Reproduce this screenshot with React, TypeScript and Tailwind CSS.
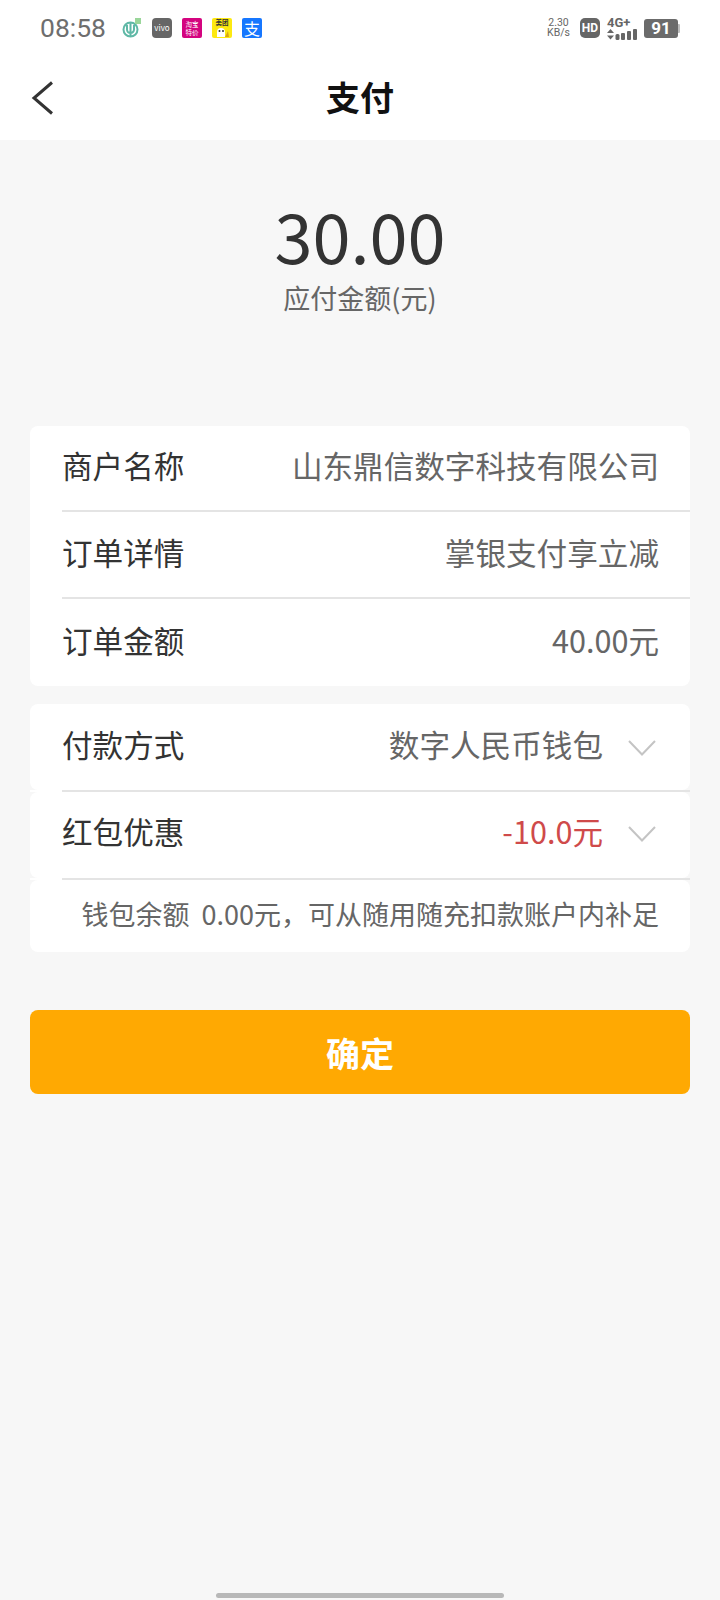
const font = { fontFamily: '"Noto Sans CJK SC", "Noto Sans", sans-serif' };

function Chevron() {
  return (
    <svg width="28" height="16" viewBox="0 0 28 16" fill="none" className="ml-[25px] mr-[3px] mt-[2px]">
      <path d="M1 1 L14 14.5 L27 1" stroke="#c4c4c4" strokeWidth="2" />
    </svg>
  );
}

function Row({
  label,
  value,
  height,
  red,
  arrow,
  className = "",
}: {
  label: string;
  value: string;
  height: string;
  red?: boolean;
  arrow?: boolean;
  className?: string;
}) {
  return (
    <div className={`flex items-center justify-between bg-white pl-8 pr-[31px] text-[30.6px] ${height} ${className}`}>
      <span className="pb-[4px] text-[#333333]">{label}</span>
      <div className="flex items-center">
        <span className={`pb-[4px] ${red ? "text-[#cf4a4a]" : "text-[#666666]"}`}>{value}</span>
        {arrow && <Chevron />}
      </div>
    </div>
  );
}

function Divider() {
  return (
    <div className="bg-white pl-8">
      <div className="h-[2px] bg-[#e4e4e4]" />
    </div>
  );
}

function StatusLeft() {
  return (
    <div className="flex items-center">
      <span className="w-[82px] text-[26.5px] leading-none text-[#6e6e6e]" style={{ fontFamily: "Roboto, sans-serif" }}>
        08:58
      </span>
      <svg width="20" height="20" viewBox="0 0 20 20" fill="none">
        <circle cx="8.5" cy="11.5" r="7" stroke="#5fb8a6" strokeWidth="2" />
        <path d="M8.5 5v13M5 7v4.5a3.5 3.5 0 0 0 7 0V7" stroke="#5fb8a6" strokeWidth="2" />
        <rect x="13" y="0" width="6" height="6" fill="#9ad69a" />
      </svg>
      <div className="ml-[10px] flex h-5 w-5 items-center justify-center rounded-[4px] bg-[#666666] text-[8px] leading-none text-white">
        vivo
      </div>
      <div className="ml-[10px] flex h-5 w-5 flex-col items-center justify-center rounded-[2px] bg-[#d4047f] text-[6.5px] leading-[8px] text-white">
        <span>淘宝</span>
        <span>特价</span>
      </div>
      <div className="ml-[10px] flex h-5 w-5 flex-col items-center rounded-[2px] bg-[#fde910] text-[6.5px] font-bold leading-[9px] text-[#333333]">
        <span>美团</span>
        <svg width="14" height="10" viewBox="0 0 14 10">
          <path d="M2 5a4 4 0 0 1 8 0v5H2z" fill="#ffffff" />
          <circle cx="4.5" cy="4" r="1" fill="#333333" />
          <circle cx="8" cy="4" r="1" fill="#333333" />
          <path d="M10 10l3-6 1 6z" fill="#d9a514" />
        </svg>
      </div>
      <div className="ml-[10px] flex h-5 w-5 items-center justify-center rounded-[2px] bg-[#1677ff] text-[16px] leading-none text-white">
        支
      </div>
    </div>
  );
}

function StatusRight() {
  return (
    <div className="flex items-center text-[#666666]">
      <div className="flex w-[25px] flex-col items-center text-[10.5px] leading-[10px]" style={{ fontFamily: "Roboto, sans-serif" }}>
        <span>2.30</span>
        <span>KB/s</span>
      </div>
      <div
        className="ml-[9px] flex h-5 w-5 items-center justify-center rounded-[5px] bg-[#666666] text-[12px] font-bold leading-none text-white"
        style={{ fontFamily: "Roboto, sans-serif" }}
      >
        HD
      </div>
      <div className="ml-[7px] flex w-[30px] flex-col">
        <span className="text-[13px] font-bold leading-[11px]" style={{ fontFamily: "Roboto, sans-serif" }}>
          4G+
        </span>
        <svg width="30" height="11" viewBox="0 0 30 11" fill="#666666" className="mt-[1px]">
          <path d="M3.5 0l3.5 4H0zM3.5 10.5L0 6.5h7z" />
          <rect x="8.5" y="5" width="4" height="6" rx="1.5" />
          <rect x="14" y="4" width="4" height="7" rx="1" />
          <rect x="20" y="2" width="4" height="9" rx="1" />
          <rect x="26" y="0" width="4" height="11" rx="1" />
        </svg>
      </div>
      <div className="ml-[7px] flex items-center">
        <div
          className="flex h-[19px] w-[34px] items-center justify-center rounded-[3px] bg-[#6b6b6b] text-[17px] font-bold leading-none text-white"
          style={{ fontFamily: "Roboto, sans-serif" }}
        >
          91
        </div>
        <div className="h-[9px] w-[2px] rounded-r-[1px] bg-[#bdbdbd]" />
      </div>
    </div>
  );
}

export default function App() {
  return (
    <div className="flex h-[1600px] flex-col bg-[#f7f7f7]" style={font}>
      <div className="h-[140px] bg-white">
        <div className="flex h-[56px] items-center justify-between pl-10 pr-10">
          <StatusLeft />
          <StatusRight />
        </div>
        <div className="flex h-[84px] items-center justify-center">
          <div className="relative flex w-full justify-center">
            <svg width="24" height="34" viewBox="0 0 24 34" fill="none" className="absolute left-[31px] top-[8px]">
              <path d="M21 1.5 L3 17 L21 32.5" stroke="#333333" strokeWidth="3" />
            </svg>
            <span className="pb-[2px] text-[34px] font-bold leading-[48px] text-[#111111]">支付</span>
          </div>
        </div>
      </div>

      <div className="flex h-[286px] flex-col items-center pt-[61px]">
        <span className="text-[68.5px] leading-[68px] text-[#333333]">30.00</span>
        <span className="mt-[12px] text-[27px] leading-[34px] text-[#666666]">应付金额(元)</span>
      </div>

      <div className="mx-[30px] overflow-hidden rounded-lg">
        <Row label="商户名称" value="山东鼎信数字科技有限公司" height="h-[84px]" />
        <Divider />
        <Row label="订单详情" value="掌银支付享立减" height="h-[85px]" />
        <Divider />
        <Row label="订单金额" value="40.00元" height="h-[87px]" />
      </div>

      <div className="mx-[30px] mt-[18px]">
        <Row label="付款方式" value="数字人民币钱包" height="h-[86px]" arrow className="rounded-lg" />
        <Divider />
        <Row label="红包优惠" value="-10.0元" height="h-[86px]" red arrow className="rounded-lg pb-[3px]" />
        <Divider />
        <div className="flex h-[72px] items-center justify-end rounded-lg bg-white pb-[3px] pr-[31px] text-[27px] text-[#666666] whitespace-pre">
          钱包余额  0.00元，可从随用随充扣款账户内补足
        </div>
      </div>

      <button className="mx-[30px] mt-[58px] h-[84px] rounded-lg bg-[#ffa902] text-[34px] font-bold text-white">
        确定
      </button>

      <div className="mt-auto flex justify-center pb-[2px]">
        <div className="h-[5px] w-[288px] rounded-full bg-[#b8b8b8]" />
      </div>
    </div>
  );
}
